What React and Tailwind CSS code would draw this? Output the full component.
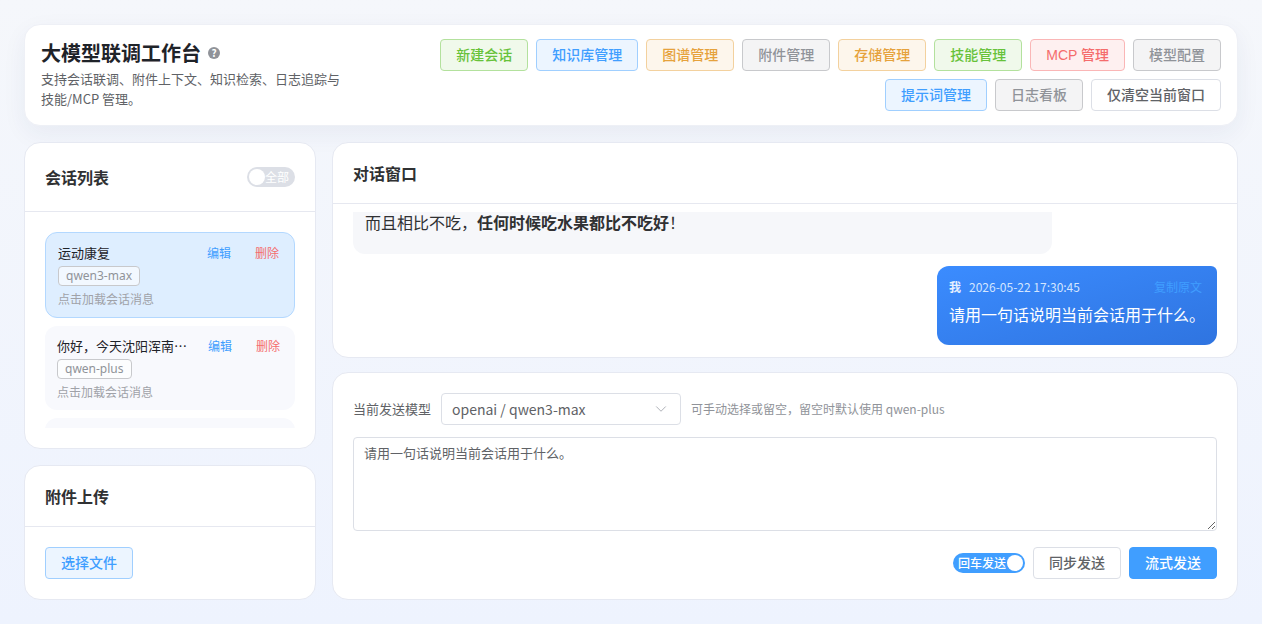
import React from "react";
import { ChevronDown } from "lucide-react";

const topRow = [
  { label: "新建会话", cls: "text-[#67c23a] bg-[#f0f9eb] border-[#b3e19d]" },
  { label: "知识库管理", cls: "text-[#409eff] bg-[#ecf5ff] border-[#a0cfff]" },
  { label: "图谱管理", cls: "text-[#e6a23c] bg-[#fdf6ec] border-[#f3d19e]" },
  { label: "附件管理", cls: "text-[#909399] bg-[#f4f4f5] border-[#c8c9cc]" },
  { label: "存储管理", cls: "text-[#e6a23c] bg-[#fdf6ec] border-[#f3d19e]" },
  { label: "技能管理", cls: "text-[#67c23a] bg-[#f0f9eb] border-[#b3e19d]" },
  { label: "MCP 管理", cls: "text-[#f56c6c] bg-[#fef0f0] border-[#fab6b6]" },
  { label: "模型配置", cls: "text-[#909399] bg-[#f4f4f5] border-[#c8c9cc]" },
];

const bottomRow = [
  { label: "提示词管理", cls: "text-[#409eff] bg-[#ecf5ff] border-[#a0cfff]" },
  { label: "日志看板", cls: "text-[#909399] bg-[#f4f4f5] border-[#c8c9cc]" },
  { label: "仅清空当前窗口", cls: "text-[#606266] bg-white border-[#dcdfe6]" },
];

function Btn({ label, cls }) {
  return (
    <button className={"h-8 px-[15px] border rounded text-sm font-medium whitespace-nowrap font-[family-name:'Liberation_Sans','Noto_Sans_CJK_SC',sans-serif] " + cls}>
      {label}
    </button>
  );
}

function SessionItem({ title, model, active }) {
  return (
    <div
      className={
        "shrink-0 rounded-xl px-3 py-[10px] " +
        (active ? "bg-[#deeeff] border border-[#b3d8ff]" : "bg-[#f8f9fd]")
      }
    >
      <div className="flex items-center justify-between h-5">
        <span className="whitespace-nowrap text-[13px] text-[#1f2329]">{title}</span>
        <div className="flex gap-6 text-xs pr-[3px]">
          <span className="text-[#409eff]">编辑</span>
          <span className="text-[#f56c6c]">删除</span>
        </div>
      </div>
      <span className="mt-[3px] flex w-fit h-5 items-center rounded border border-[#c8c9cc] px-[7px] text-xs text-[#909399] bg-white/60 font-[family-name:'Noto_Sans',sans-serif]">
        {model}
      </span>
      <p className="mt-1 h-[17px] text-xs leading-[17px] text-[#a0a2a8]">点击加载会话消息</p>
    </div>
  );
}

export default function App() {
  return (
    <div className="h-[624px] overflow-hidden bg-gradient-to-b from-[#f5f7fb] to-[#eef3fe] p-6 flex flex-col gap-4 text-[#303133] font-[family-name:'Noto_Sans_CJK_SC','Noto_Sans',sans-serif]">
      <header className="h-[102px] shrink-0 bg-white rounded-2xl border border-[#eef0f6] shadow-[0_8px_24px_rgba(30,50,100,0.06)] px-4 py-[14px] flex justify-between">
        <div className="w-[310px]">
          <div className="flex items-center gap-[7px] h-7">
            <h1 className="text-xl font-bold text-[#1f2329] leading-7">大模型联调工作台</h1>
            <span className="w-3 h-3 rounded-full bg-[#909399] text-white text-[10px] font-bold flex items-center justify-center leading-none">?</span>
          </div>
          <p className="mt-[2px] text-[13px] leading-5 text-[#606266]">
            支持会话联调、附件上下文、知识检索、日志追踪与<br />技能/MCP 管理。
          </p>
        </div>
        <div className="flex flex-col items-end gap-2">
          <div className="flex gap-2">
            {topRow.map((b) => (
              <Btn key={b.label} {...b} />
            ))}
          </div>
          <div className="flex gap-2">
            {bottomRow.map((b) => (
              <Btn key={b.label} {...b} />
            ))}
          </div>
        </div>
      </header>

      <div className="flex-1 min-h-0 flex gap-4">
        <aside className="w-[292px] shrink-0 flex flex-col gap-4">
          <section className="h-[307px] bg-white rounded-2xl border border-[#e6e9f2] flex flex-col">
            <div className="h-[69px] shrink-0 border-b border-[#e6e8f0] px-5 flex items-center justify-between">
              <h2 className="text-base font-semibold text-[#303133]">会话列表</h2>
              <div className="w-12 h-5 rounded-full bg-[#dcdfe6] flex items-center p-[2px]">
                <span className="w-4 h-4 rounded-full bg-white shrink-0" />
                <span className="text-xs text-white leading-none">全部</span>
              </div>
            </div>
            <div className="mx-5 mt-5 h-[196px] overflow-hidden flex flex-col gap-2">
              <SessionItem title="运动康复" model="qwen3-max" active />
              <SessionItem title="你好，今天沈阳浑南…" model="qwen-plus" />
              <div className="h-10 shrink-0 rounded-xl bg-[#f8f9fd]" />
            </div>
          </section>

          <section className="flex-1 bg-white rounded-2xl border border-[#e6e9f2] flex flex-col">
            <div className="h-[61px] shrink-0 border-b border-[#e6e8f0] px-5 flex items-center">
              <h2 className="text-base font-semibold text-[#303133]">附件上传</h2>
            </div>
            <div className="px-5 pt-5">
              <Btn label="选择文件" cls="text-[#409eff] bg-[#ecf5ff] border-[#a0cfff]" />
            </div>
          </section>
        </aside>

        <main className="flex-1 min-w-0 flex flex-col gap-[14px]">
          <section className="h-[216px] shrink-0 bg-white rounded-2xl border border-[#e6e9f2] flex flex-col overflow-hidden">
            <div className="h-[61px] shrink-0 border-b border-[#e6e8f0] px-5 flex items-center">
              <h2 className="text-base font-semibold text-[#303133]">对话窗口</h2>
            </div>
            <div className="flex-1 min-h-0 mt-2 mb-3 mx-5 overflow-hidden flex flex-col justify-end gap-3">
              <div className="shrink-0 w-[699px] h-[42px] bg-[#f6f7fa] rounded-b-xl px-3 text-base text-[#303133] leading-5">
                而且相比不吃，<strong className="font-semibold">任何时候吃水果都比不吃好</strong>！
              </div>
              <div className="shrink-0 self-end w-[280px] h-[79px] rounded-xl rounded-tr-md bg-gradient-to-br from-[#3b8cff] to-[#2f74e0] pl-3 pr-[15px] pt-[11px] text-white">
                <div className="flex items-center justify-between h-5 text-xs">
                  <div className="flex items-center gap-2">
                    <b className="font-semibold text-[#e6f0ff]">我</b>
                    <span className="text-[#d3e5ff]">2026-05-22 17:30:45</span>
                  </div>
                  <span className="text-[#409eff]">复制原文</span>
                </div>
                <p className="mt-[6px] text-base leading-[22px] whitespace-nowrap">请用一句话说明当前会话用于什么。</p>
              </div>
            </div>
          </section>

          <section className="flex-1 bg-white rounded-2xl border border-[#e6e9f2] px-5 pt-5">
            <div className="flex items-center h-8">
              <span className="text-[13px] text-[#606266]">当前发送模型</span>
              <div className="ml-[10px] w-[240px] h-8 rounded border border-[#dcdfe6] px-[10px] flex items-center justify-between text-sm text-[#606266]">
                <span>openai / qwen3-max</span>
                <ChevronDown size={18} strokeWidth={1.25} className="text-[#a8abb2]" />
              </div>
              <span className="ml-[10px] text-xs text-[#909399]">可手动选择或留空，留空时默认使用 qwen-plus</span>
            </div>
            <textarea
              readOnly
              value="请用一句话说明当前会话用于什么。"
              className="mt-3 block w-full h-[94px] rounded border border-[#dcdfe6] px-[10px] py-[5px] text-[13px] leading-5 text-[#606266] outline-none"
            />
            <div className="mt-4 flex items-center justify-end gap-2">
              <div className="w-[72px] h-5 rounded-full bg-[#409eff] flex items-center justify-between pl-[5px] pr-[2px]">
                <span className="text-xs font-medium text-white leading-none whitespace-nowrap">回车发送</span>
                <span className="w-4 h-4 rounded-full bg-white shrink-0" />
              </div>
              <Btn label="同步发送" cls="text-[#606266] bg-white border-[#dcdfe6]" />
              <Btn label="流式发送" cls="text-white bg-[#409eff] border-[#409eff]" />
            </div>
          </section>
        </main>
      </div>
    </div>
  );
}
